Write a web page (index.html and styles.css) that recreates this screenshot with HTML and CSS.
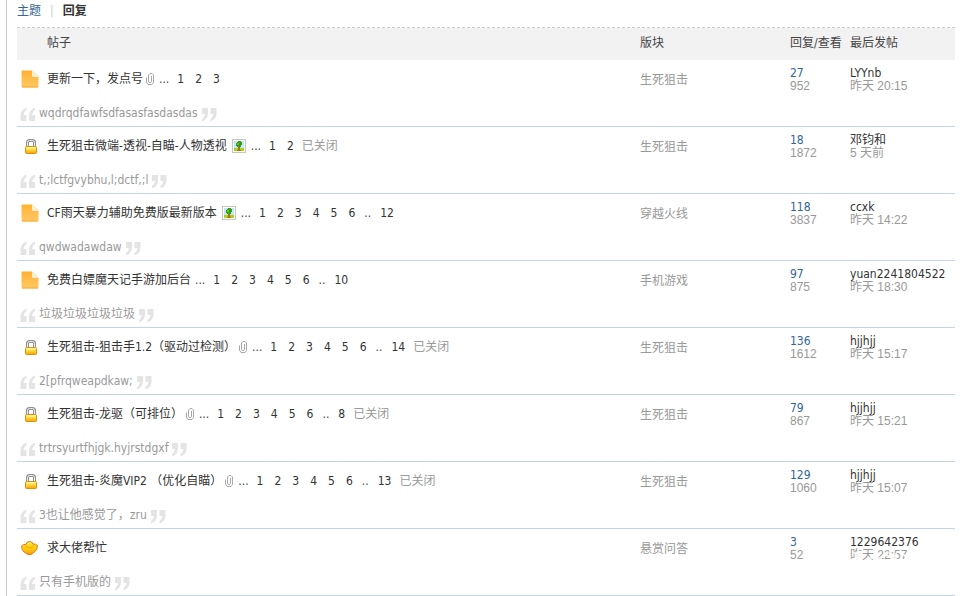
FILE: index.html
```
<!DOCTYPE html>
<html lang="zh-CN">
<head>
  <meta charset="UTF-8">
  <title>我的帖子 - 回复</title>
  <link rel="stylesheet" href="styles.css">
</head>
<body>

  <!-- shared icons -->
  <svg class="sprite" aria-hidden="true">
    <defs>
      <linearGradient id="gFolder" x1="0" y1="0" x2="0" y2="1"><stop offset="0" stop-color="#ffb02e"/><stop offset="0.4" stop-color="#ffbc4a"/><stop offset="1" stop-color="#ffc862"/></linearGradient>
      <linearGradient id="gLock" x1="0" y1="0" x2="0" y2="1"><stop offset="0" stop-color="#fff27a"/><stop offset="0.5" stop-color="#ffd62e"/><stop offset="1" stop-color="#f99d0c"/></linearGradient>
      <linearGradient id="gGold" x1="0" y1="0" x2="0" y2="1"><stop offset="0" stop-color="#ffe030"/><stop offset="0.6" stop-color="#ffc80a"/><stop offset="1" stop-color="#f59a10"/></linearGradient>
    </defs>
    <symbol id="folder" viewBox="0 0 18 18">
      <path d="M1.500 0.500H11L17.500 6.500V16Q17.500 17.500 16 17.500H2Q0.500 17.500 0.500 16V1.500Q0.500 0.500 1.500 0.500Z" fill="url(#gFolder)"/>
      <path d="M1 17H17" stroke="#f9a93a"/>
      <path d="M11 0.500V5.500Q11 7 12.500 7H17.500Z" fill="#fff0d4"/>
    </symbol>
    <symbol id="lock" viewBox="0 0 14 15">
      <path d="M3.500 8V3.500Q3.500 1.500 5.500 1.500H8.500Q10.500 1.500 10.500 3.500V8" fill="none" stroke="#8f8f8f" stroke-width="3"/>
      <path d="M3.500 8V3.500Q3.500 1.500 5.500 1.500H8.500Q10.500 1.500 10.500 3.500V8" fill="none" stroke="#efefef" stroke-width="1"/>
      <rect x="1.500" y="7.500" width="11" height="7" rx="1" fill="url(#gLock)" stroke="#e0900f"/>
      <path d="M3 9H11" stroke="#fffbd0"/>
    </symbol>
    <symbol id="gold" viewBox="0 0 17 16">
      <path d="M0.500 6Q2 4 5 4.500Q5.500 1.500 8.500 1.500Q11.500 1.500 12 4Q14.500 3.500 16.500 5.500Q16.500 9 14 11.500L10 14.500H7L3 12Q0.500 9.500 0.500 6Z" fill="url(#gGold)" stroke="#e57a12"/>
      <path d="M4.500 6Q8.500 9.500 12.500 5.500" fill="none" stroke="#f7a300"/>
      <path d="M6.500 4Q8.500 2 10.500 3.500" fill="none" stroke="#fff27a"/>
    </symbol>
    <symbol id="clip" viewBox="0 0 9 12">
      <path d="M2.500 4.500V8.500Q2.500 9.500 4 9.500Q5.500 9.500 5.500 8.500V3M0.500 4.500V9L2 11.500H6L7.500 9.500V2L6 0.500H4L2.500 2V7" fill="none" stroke="#a8a8a8"/>
    </symbol>
    <symbol id="pic" viewBox="0 0 14 14">
      <rect x="0.500" y="0.500" width="13" height="13" fill="#fff" stroke="#c4c8ba"/>
      <rect x="2" y="2" width="10" height="10" fill="#bfe6fb"/>
      <rect x="2" y="9" width="10" height="3" fill="#a7d514"/>
      <path d="M6 7H8V11H9V12H5V11H6Z" fill="#b56a1c"/>
      <path d="M5 3H6V2H9V3H10V4H10V6H9V8H5V7H4V4H5Z" fill="#3c9a14"/>
      <rect x="5" y="4" width="2" height="2" fill="#72bd27"/>
    </symbol>
    <symbol id="quote" viewBox="0 0 16 15">
      <path d="M6.500 0.500Q1 2.500 0.500 8V14H6.500V8H3.500Q4 4.500 6.500 3Z" fill="#e4e4e4"/>
      <path d="M15 0.500Q9.500 2.500 9 8V14H15V8H12Q12.500 4.500 15 3Z" fill="#e4e4e4"/>
    </symbol>
    <symbol id="fleck" viewBox="0 0 60 13">
      <path d="M2 4H12M4 10L16 6M18 9H32M20 3L28 1M36 6L44 10M46 4V12M50 3L58 9M8 1V12M24 6V13M40 1V8" fill="none" stroke="#fff" stroke-width="1.500"/>
    </symbol>
  </svg>

  <div class="main">
    <div class="tabs">
      <a href="#">主题</a>
      <span class="pipe">|</span>
      <a href="#" class="current">回复</a>
    </div>

    <table class="threads">
      <colgroup>
        <col class="c-icon">
        <col>
        <col class="c-forum">
        <col class="c-num">
        <col class="c-by">
      </colgroup>
      <thead>
        <tr>
          <th></th>
          <th>帖子</th>
          <th>版块</th>
          <th class="num">回复/查看</th>
          <th>最后发帖</th>
        </tr>
      </thead>
      <tbody id="list"></tbody>
    </table>
  </div>

  <script src="script.js"></script>
</body>
</html>
```
FILE: styles.css
```
body {
  margin: 0;
  font: 12px/18px "DejaVu Sans Condensed", "Noto Sans CJK SC", sans-serif;
  color: #444;
  background: #fff;
}

a {
  color: #333;
  text-decoration: none;
}

.sprite {
  position: absolute;
  width: 0;
  height: 0;
}

.main {
  margin-left: 6px;
  padding: 0 5px 0 10px;
  border-left: 1px solid #ccc;
}

.tabs {
  display: flex;
  gap: 9px;
  padding: 2px 0 7px;
}

.tabs a {
  color: #369;
}

.tabs .current {
  color: #333;
  font-weight: bold;
}

.pipe {
  color: #ccc;
}

.threads {
  width: 100%;
  table-layout: fixed;
  border-collapse: separate;
  border-spacing: 0;
  border-top: 1px dashed #ccc;
}

.c-icon { width: 30px; }
.c-forum { width: 150px; }
.c-num { width: 60px; }
.c-by { width: 105px; }

th, td {
  box-sizing: border-box;
  padding: 0;
  text-align: left;
  font-weight: normal;
  white-space: nowrap;
}

thead th {
  height: 32px;
  padding-bottom: 2px;
  background: #f2f2f2;
}

.subject td {
  height: 38px;
}

.subject .forum, .subject .stack {
  padding-top: 2px;
}

.icon svg {
  display: block;
  margin-left: 4px;
}

.icon .i-lock {
  margin-left: 7px;
}

.title {
  display: flex;
  align-items: center;
}

.title svg {
  flex: none;
}

.i-clip {
  margin-left: 3px;
}

.i-pic {
  margin: 0 1px 0 5px;
}

.pages {
  display: flex;
  gap: 11px;
  margin-left: 4px;
}

.pages .dots {
  margin-right: -3px;
}

.pages .skip {
  margin: 0 -2px;
}

.closed {
  margin-left: 8px;
}

.closed, .forum a, .views, .date, .quote td {
  color: #999;
}

.stack {
  line-height: 13px;
}

.stack a, .stack span {
  display: block;
}

.num .replies {
  color: #369;
}

.stack .views, .stack .date {
  color: #999;
  font-family: "Liberation Sans", "Noto Sans CJK SC", sans-serif;
}

.stack .date {
  position: relative;
}

.i-fleck {
  position: absolute;
  top: 0;
  left: 0;
}

.quote td {
  height: 29px;
  padding-top: 2px;
  border-bottom: 1px solid #c2d5e3;
}

.said {
  display: flex;
  align-items: center;
  gap: 3px;
  margin-left: 3px;
}

.said svg {
  flex: none;
  margin-top: 2px;
}

.said .close {
  transform: rotate(180deg);
}
```
FILE: script.js
```
const threads = [
  { icon: "folder", title: "更新一下，发点号", mark: "clip", pages: [1, 2, 3], forum: "生死狙击", replies: 27, views: 952, by: "LYYnb", date: "昨天 20:15", quote: "wqdrqdfawfsdfasasfasdasdas" },
  { icon: "lock", title: "生死狙击微端-透视-自瞄-人物透视", mark: "pic", pages: [1, 2], closed: true, forum: "生死狙击", replies: 18, views: 1872, by: "邓钧和", date: "5 天前", quote: "t,;lctfgvybhu,l;dctf,;l" },
  { icon: "folder", title: "CF雨天暴力辅助免费版最新版本", mark: "pic", pages: [1, 2, 3, 4, 5, 6, "..", 12], forum: "穿越火线", replies: 118, views: 3837, by: "ccxk", date: "昨天 14:22", quote: "qwdwadawdaw" },
  { icon: "folder", title: "免费白嫖魔天记手游加后台", pages: [1, 2, 3, 4, 5, 6, "..", 10], forum: "手机游戏", replies: 97, views: 875, by: "yuan2241804522", date: "昨天 18:30", quote: "垃圾垃圾垃圾垃圾" },
  { icon: "lock", title: "生死狙击-狙击手1.2（驱动过检测）", mark: "clip", pages: [1, 2, 3, 4, 5, 6, "..", 14], closed: true, forum: "生死狙击", replies: 136, views: 1612, by: "hjjhjj", date: "昨天 15:17", quote: "2[pfrqweapdkaw;" },
  { icon: "lock", title: "生死狙击-龙驱（可排位）", mark: "clip", pages: [1, 2, 3, 4, 5, 6, "..", 8], closed: true, forum: "生死狙击", replies: 79, views: 867, by: "hjjhjj", date: "昨天 15:21", quote: "trtrsyurtfhjgk.hyjrstdgxf" },
  { icon: "lock", title: "生死狙击-炎魔VIP2 （优化自瞄）", mark: "clip", pages: [1, 2, 3, 4, 5, 6, "..", 13], closed: true, forum: "生死狙击", replies: 129, views: 1060, by: "hjjhjj", date: "昨天 15:07", quote: "3也让他感觉了，zru" },
  { icon: "gold", title: "求大佬帮忙", forum: "悬赏问答", replies: 3, views: 52, by: "1229642376", date: "昨天 22:57", worn: true, quote: "只有手机版的" }
];

const sizes = { folder: [18, 18], lock: [14, 15], gold: [17, 16], clip: [9, 12], pic: [14, 14], quote: [16, 15], fleck: [60, 13] };

function icon(name, cls = "") {
  const [w, h] = sizes[name];
  return `<svg class="i-${name} ${cls}" width="${w}" height="${h}" aria-hidden="true"><use href="#${name}"/></svg>`;
}

function pager(pages) {
  const links = pages.map(p => p === ".." ? `<span class="skip">..</span>` : `<a href="#">${p}</a>`);
  return `<span class="pages"><span class="dots">...</span>${links.join("")}</span>`;
}

document.getElementById("list").innerHTML = threads.map(t => `
  <tr class="subject">
    <td class="icon">${icon(t.icon)}</td>
    <td>
      <div class="title">
        <a href="#">${t.title}</a>
        ${t.mark ? icon(t.mark) : ""}
        ${t.pages ? pager(t.pages) : ""}
        ${t.closed ? `<span class="closed">已关闭</span>` : ""}
      </div>
    </td>
    <td class="forum"><a href="#">${t.forum}</a></td>
    <td class="num stack"><a href="#" class="replies">${t.replies}</a><span class="views">${t.views}</span></td>
    <td class="stack"><a href="#">${t.by}</a><a href="#" class="date">${t.date}${t.worn ? icon("fleck") : ""}</a></td>
  </tr>
  <tr class="quote">
    <td colspan="5"><div class="said">${icon("quote")}<span>${t.quote}</span>${icon("quote", "close")}</div></td>
  </tr>`).join("");
```
